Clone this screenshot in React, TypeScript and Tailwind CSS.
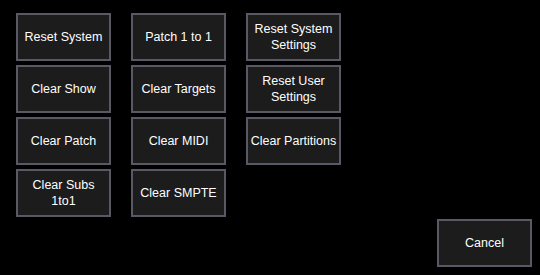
const columns: string[][] = [
	['Reset System', 'Clear Show', 'Clear Patch', 'Clear Subs\n1to1'],
	['Patch 1 to 1', 'Clear Targets', 'Clear MIDI', 'Clear SMPTE'],
	['Reset System\nSettings', 'Reset User\nSettings', 'Clear Partitions'],
]

function Btn({ label }: { label: string }) {
	return (
		<button className="flex h-12 w-[95px] flex-col items-center justify-center border-2 border-[#5b5866] bg-[#1c1c1c] text-center text-[12.5px] leading-4 whitespace-nowrap text-white">
			{label.split('\n').map((line) => (
				<span key={line}>{line}</span>
			))}
		</button>
	)
}

export default function App() {
	return (
		<div
			className="flex h-[275px] w-[540px] flex-col bg-black pb-2 pl-4 pr-2 pt-[13px]"
			style={{ fontFamily: '"Liberation Sans", Arial, sans-serif' }}
		>
			<div className="flex gap-5">
				{columns.map((col, i) => (
					<div key={i} className="flex flex-col gap-1">
						{col.map((label) => (
							<Btn key={label} label={label} />
						))}
					</div>
				))}
			</div>
			<div className="flex flex-1 items-end justify-end">
				<Btn label="Cancel" />
			</div>
		</div>
	)
}
